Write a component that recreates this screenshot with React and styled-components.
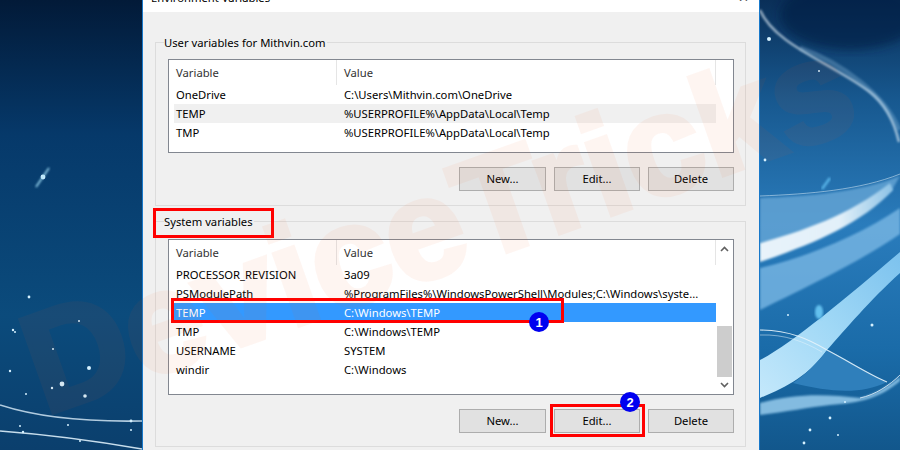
import React from 'react'
import styled, { createGlobalStyle } from 'styled-components'

const GlobalStyle = createGlobalStyle`
  html, body { margin: 0; padding: 0; background: #0b3d6b; }
  * { box-sizing: border-box; }
`

const Page = styled.div`
  position: relative;
  width: 900px;
  height: 450px;
  overflow: hidden;
  font-family: 'Noto Sans', 'Open Sans', sans-serif;
  font-size: 11.25px;
  color: #000;
`

const WallpaperSvg = styled.svg`
  position: absolute;
  inset: 0;
`

const Dialog = styled.div`
  position: relative;
  width: 618px;
  height: 450px;
  margin-left: 142px;
  border-left: 1px solid #1979ca;
  border-right: 1px solid #1979ca;
  background: #f0f0f0;
`

const TitleBar = styled.div`
  position: relative;
  height: 12px;
  background: #fff;
  overflow: hidden;
`

const TitleText = styled.span`
  position: absolute;
  left: 8px;
  top: -10px;
  line-height: 16px;
`

const CloseMark = styled.span`
  position: absolute;
  right: 10px;
  top: -11px;
  font-size: 13px;
  line-height: 16px;
  color: #333;
`

const Body = styled.div`
  display: flex;
  flex-direction: column;
  gap: 15px;
  padding: 30px 13px 0 12px;
`

const Group = styled.section`
  position: relative;
  height: ${(p) => p.$height}px;
  padding: ${(p) => p.$top}px 11px 0 12px;
  border: 1px solid #dcdcdc;
`

const GroupLabel = styled.span`
  position: absolute;
  left: 8px;
  top: -8px;
  padding: 0 1px 0 0;
  background: #f0f0f0;
  line-height: 16px;
  white-space: nowrap;
`

const ListBox = styled.div`
  position: relative;
  height: ${(p) => p.$height}px;
  padding-left: 5px;
  border: 1px solid #828790;
  background: #fff;
`

const HeaderRow = styled.div`
  display: flex;
  height: 25px;
  color: #333;
`

const HeaderCell = styled.div`
  display: flex;
  align-items: center;
  width: ${(p) => p.$width}px;
  height: 25px;
  padding-left: ${(p) => p.$pad}px;
  border-right: 1px solid #e5e5e5;
  line-height: 1;
`

const Row = styled.div`
  position: relative;
  display: flex;
  align-items: center;
  width: 542px;
  height: 19px;
  padding-left: 2px;
  background: ${(p) => (p.$selected ? '#3399ff' : p.$muted ? '#f0f0f0' : 'transparent')};
  color: ${(p) => (p.$selected ? '#fff' : '#000')};
  white-space: nowrap;
`

const NameCell = styled.span`
  width: 168px;
  flex: none;
`

const ScrollBar = styled.div`
  position: absolute;
  top: 0;
  right: 0;
  bottom: 0;
  display: flex;
  flex-direction: column;
  align-items: center;
  justify-content: space-between;
  width: 17px;
  padding: 1px 0;
  background: #fff;
`

const ScrollArrow = styled.svg`
  flex: none;
  margin: 5px 0;
`

const ScrollTrack = styled.div`
  flex: 1;
  width: 15px;
  padding-top: 69px;
`

const ScrollThumb = styled.div`
  width: 100%;
  height: 51px;
  background: #cdcdcd;
`

const ButtonRow = styled.div`
  display: flex;
  justify-content: flex-end;
  gap: 8px;
  margin-top: 14px;
`

const Button = styled.button`
  position: relative;
  width: ${(p) => p.$width || 86}px;
  height: 24px;
  padding: 0;
  border: 1px solid #adadad;
  background: #e1e1e1;
  color: #000;
  font: inherit;
  line-height: 1;
`

const Highlight = styled.span`
  position: absolute;
  left: ${(p) => p.$left}px;
  top: ${(p) => p.$top}px;
  width: ${(p) => p.$width}px;
  height: ${(p) => p.$height}px;
  border: 3px solid #ff0000;
  pointer-events: none;
`

const Badge = styled.span`
  position: absolute;
  left: ${(p) => p.$left}px;
  top: ${(p) => p.$top}px;
  display: flex;
  align-items: center;
  justify-content: center;
  width: 20px;
  height: 20px;
  border-radius: 50%;
  background: #0000f0;
  color: #fff;
  font: bold 13px 'Liberation Sans', sans-serif;
`

const Watermark = styled.div`
  position: absolute;
  left: 52px;
  top: 294px;
  transform: rotate(-19.5deg);
  transform-origin: 0 100%;
  font: bold 142px 'Liberation Sans', sans-serif;
  line-height: 1;
  color: #f05a1e;
  -webkit-text-stroke: 5px #f05a1e;
  opacity: 0.055;
  white-space: nowrap;
  pointer-events: none;
`

const Wallpaper = () => (
  <WallpaperSvg width="900" height="450" viewBox="0 0 900 450">
    <defs>
      <linearGradient id="left" x1="0" y1="0" x2="0" y2="1">
        <stop offset="0" stopColor="#021a38" />
        <stop offset="0.3" stopColor="#06396a" />
        <stop offset="0.7" stopColor="#0b4b7c" />
        <stop offset="1" stopColor="#0b3f6d" />
      </linearGradient>
      <linearGradient id="right" x1="0" y1="0" x2="0" y2="1">
        <stop offset="0" stopColor="#0a2f58" />
        <stop offset="0.22" stopColor="#17588f" />
        <stop offset="0.5" stopColor="#2a7cbc" />
        <stop offset="0.78" stopColor="#1a6ba8" />
        <stop offset="1" stopColor="#12578c" />
      </linearGradient>
      <linearGradient id="band" x1="0" y1="1" x2="1" y2="0">
        <stop offset="0" stopColor="#c4e8fb" />
        <stop offset="0.5" stopColor="#a0d8f6" />
        <stop offset="1" stopColor="#7cc2ee" />
      </linearGradient>
      <linearGradient id="sheen" x1="0" y1="0" x2="1" y2="0">
        <stop offset="0" stopColor="#e8f3fa" />
        <stop offset="0.6" stopColor="#e2f0f9" />
        <stop offset="1" stopColor="#8cc2e6" />
      </linearGradient>
      <filter id="soft"><feGaussianBlur stdDeviation="0.9" /></filter>
      <filter id="softer"><feGaussianBlur stdDeviation="5" /></filter>
    </defs>
    <rect width="142" height="450" fill="url(#left)" />
    <rect x="760" width="140" height="450" fill="url(#right)" />

    <g fill="none" stroke="#dbeefa">
      <path d="M0 405 C40 418 90 422 142 421" strokeWidth="1.6" opacity="0.8" />
      <path d="M0 431 C40 434 90 440 142 449" strokeWidth="1.6" opacity="0.9" />
    </g>
    <g fill="#d5f1ff">
      {[[43,177,2.4],[29,297,1.4],[13,330,1.2],[15,332,1],[10,371,1.2],[89,368,2],[62,384,2.4],[85,396,1.8],[52,388,1.2],[26,394,1],[53,349,1],[79,321,1],[20,426,1],[131,421,1.4],[131,430,1],[68,425,1],[23,432,1.2],[80,441,1]].map(([x, y, r]) => (
        <circle key={`${x}-${y}`} cx={x} cy={y} r={r} />
      ))}
    </g>
    <path d="M36 187 L49 168" stroke="#9fdcf5" strokeWidth="1.5" filter="url(#soft)" />

    {/* top-right dark patch and the long thin sweep */}
    <ellipse cx="850" cy="15" rx="70" ry="35" fill="#041f42" opacity="0.6" filter="url(#softer)" />
    <path d="M760 10 C775 45 830 62 870 92 C888 106 895 125 899 142" fill="none" stroke="#e6f3fb" strokeWidth="2.4" opacity="0.65" filter="url(#soft)" />
    <path d="M800 48 C840 62 885 95 899 130" fill="none" stroke="#9cc8e6" strokeWidth="5" opacity="0.3" filter="url(#soft)" />

    {/* ribbons, from the upper streak down to the bright band */}
    <path d="M760 198 C810 196 860 192 900 176 L892 190 C860 220 810 236 760 243 Z" fill="#6aa9d8" opacity="0.75" filter="url(#soft)" />
    <path d="M760 243 C800 232 850 215 890 183 L893 190 C860 225 810 245 760 262 Z" fill="url(#sheen)" filter="url(#soft)" />
    <path d="M760 268 C810 256 860 235 900 208 L900 234 C860 262 800 290 760 310 Z" fill="#79b7e4" opacity="0.8" filter="url(#soft)" />
    <path d="M760 360 C790 345 850 295 900 252 L900 273 C870 300 845 330 827 350 C810 375 785 388 760 398 Z" fill="url(#band)" />
    <path d="M827 350 C850 360 870 375 887 382 C860 395 830 392 793 383 C805 375 818 362 827 350 Z" fill="#2f7fbb" />
    <path d="M760 403 C800 392 830 395 860 398 C875 395 890 385 900 377 L900 381 C880 398 860 403 830 405 C810 407 785 412 760 415 Z" fill="#9fd2f2" opacity="0.8" filter="url(#soft)" />

    <g fill="none" stroke="#e6f3fb">
      <path d="M760 330 C790 330 810 340 827 350 C850 362 870 375 887 382" strokeWidth="1.2" opacity="0.9" />
      <path d="M760 335 C785 334 805 342 822 352" strokeWidth="1" opacity="0.5" />
      <path d="M860 398 C875 395 890 385 900 375" strokeWidth="1" opacity="0.8" />
      <path d="M760 196 C810 194 860 190 900 174" strokeWidth="1" opacity="0.5" />
    </g>
    <g fill="#d5f1ff">
      {[[769,39,2],[819,71,1],[765,160,1.4],[872,325,1.5],[788,315,1],[838,435,1],[810,430,1.4],[830,418,1.4],[804,443,1.4],[845,402,1]].map(([x, y, r]) => (
        <circle key={`${x}-${y}`} cx={x} cy={y} r={r} />
      ))}
    </g>
    <path d="M822 189 L830 178" stroke="#58b4e8" strokeWidth="2.5" filter="url(#soft)" />
    <ellipse cx="819" cy="312" rx="4" ry="7" fill="#63c0ee" filter="url(#soft)" />
  </WallpaperSvg>
)

const ListHeader = () => (
  <HeaderRow>
    <HeaderCell $width={163} $pad={2}>Variable</HeaderCell>
    <HeaderCell $width={379} $pad={7}>Value</HeaderCell>
  </HeaderRow>
)

const Scroller = () => (
  <ScrollBar>
    <ScrollArrow width="9" height="6" viewBox="0 0 9 6">
      <path d="M1 5 L4.5 1.5 L8 5" fill="none" stroke="#606060" strokeWidth="1.6" />
    </ScrollArrow>
    <ScrollTrack><ScrollThumb /></ScrollTrack>
    <ScrollArrow width="9" height="6" viewBox="0 0 9 6">
      <path d="M1 1 L4.5 4.5 L8 1" fill="none" stroke="#606060" strokeWidth="1.6" />
    </ScrollArrow>
  </ScrollBar>
)

const userVars = [
  ['OneDrive', 'C:\\Users\\Mithvin.com\\OneDrive'],
  ['TEMP', '%USERPROFILE%\\AppData\\Local\\Temp', 'muted'],
  ['TMP', '%USERPROFILE%\\AppData\\Local\\Temp'],
]

const systemVars = [
  ['PROCESSOR_REVISION', '3a09'],
  ['PSModulePath', '%ProgramFiles%\\WindowsPowerShell\\Modules;C:\\Windows\\syste...'],
  ['TEMP', 'C:\\Windows\\TEMP', 'selected'],
  ['TMP', 'C:\\Windows\\TEMP'],
  ['USERNAME', 'SYSTEM'],
  ['windir', 'C:\\Windows'],
]

export default function App() {
  return (
    <Page>
      <GlobalStyle />
      <Wallpaper />
      <Dialog>
        <TitleBar>
          <TitleText>Environment Variables</TitleText>
          <CloseMark>✕</CloseMark>
        </TitleBar>
        <Body>
          <Group $height={164} $top={16}>
            <GroupLabel>User variables for Mithvin.com</GroupLabel>
            <ListBox $height={94}>
              <ListHeader />
              {userVars.map(([name, value, state]) => (
                <Row key={name} $muted={state === 'muted'}>
                  <NameCell>{name}</NameCell>
                  {value}
                </Row>
              ))}
            </ListBox>
            <ButtonRow>
              <Button $width={87}>New...</Button>
              <Button>Edit...</Button>
              <Button>Delete</Button>
            </ButtonRow>
          </Group>
          <Group $height={226} $top={17}>
            <GroupLabel>
              System variables
              <Highlight $left={-11} $top={-6} $width={121} $height={30} />
            </GroupLabel>
            <ListBox $height={156}>
              <ListHeader />
              {systemVars.map(([name, value, state]) => (
                <Row key={name} $selected={state === 'selected'}>
                  <NameCell>{name}</NameCell>
                  {value}
                  {state === 'selected' && (
                    <Highlight $left={-3} $top={-5} $width={393} $height={25}>
                      <Badge $left={355} $top={11}>1</Badge>
                    </Highlight>
                  )}
                </Row>
              ))}
              <Scroller />
            </ListBox>
            <ButtonRow>
              <Button $width={87}>New...</Button>
              <Button>
                Edit...
                <Highlight $left={-5} $top={-6} $width={95} $height={33}>
                  <Badge $left={67} $top={-15}>2</Badge>
                </Highlight>
              </Button>
              <Button>Delete</Button>
            </ButtonRow>
          </Group>
        </Body>
      </Dialog>
      <Watermark>DeviceTricks</Watermark>
    </Page>
  )
}
